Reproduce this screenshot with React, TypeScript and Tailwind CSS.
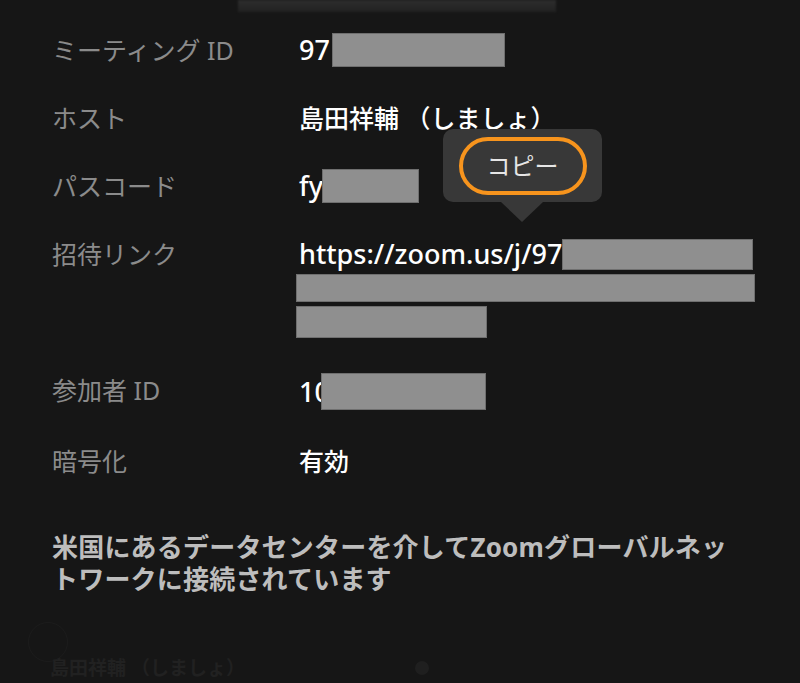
import React from "react";

const font = { fontFamily: '"Noto Sans", "Noto Sans CJK JP", sans-serif' };

function Redact({ className }: { className: string }) {
  return <span className={`inline-block shrink-0 bg-[#8f8f8f] border border-[#6f6f6f] ${className}`} />;
}

function Row({ label, children }: { label: string; children: React.ReactNode }) {
  return (
    <div className="flex py-[17px]">
      <div className="w-[247px] shrink-0 text-[25px] leading-[34px] text-[#8b8b8b]">{label}</div>
      <div className="flex-1 text-[25px] leading-[34px] font-medium text-white">{children}</div>
    </div>
  );
}

export default function App() {
  return (
    <div
      className="relative w-[800px] h-[683px] overflow-hidden bg-[#161616]"
      style={font}
    >
      {/* blurred top bar */}
      <div className="absolute left-[238px] top-0 w-[318px] h-[12px] bg-gradient-to-b from-[#2e2e2e] to-[#222222] blur-[1px]" />

      <div className="pl-[52px] pt-4">
        <Row label="ミーティング ID">
          <div className="flex items-center">
            <span className="text-[27px]">97</span>
            <Redact className="w-[173px] h-[34px] ml-[2px]" />
          </div>
        </Row>
        <Row label="ホスト">
          <span>島田祥輔 （しましょ）</span>
        </Row>
        <Row label="パスコード">
          <div className="flex items-center">
            <span className="text-[27px]">fy</span>
            <Redact className="w-[97px] h-[34px] -ml-[1px]" />
          </div>
        </Row>
        <Row label="招待リンク">
          <div className="flex flex-col">
            <div className="flex items-center h-[34px]">
              <span className="text-[27px] whitespace-nowrap">https://zoom.us/j/97</span>
              <Redact className="w-[191px] h-[31px]" />
            </div>
            <div className="flex items-center h-[34px] -ml-[3px]">
              <Redact className="w-[459px] h-[28px]" />
            </div>
            <div className="flex items-center h-[34px] -ml-[3px]">
              <Redact className="w-[191px] h-[32px]" />
            </div>
          </div>
        </Row>
        <Row label="参加者 ID">
          <div className="flex items-center">
            <span className="text-[27px]">10</span>
            <Redact className="w-[165px] h-[37px] -ml-[9px]" />
          </div>
        </Row>
        <Row label="暗号化">
          <span>有効</span>
        </Row>

        <p className="mt-[36px] text-[26px] leading-[32px] font-bold text-[#bdbdbd] tracking-[0.2px]">
          米国にあるデータセンターを介してZoomグローバルネッ
          <br />
          トワークに接続されています
        </p>
      </div>

      {/* faded content below, partly scrolled out */}
      <div className="absolute left-[28px] top-[622px] w-[40px] h-[40px] rounded-full border border-[#1c1c1c]" />
      <div className="absolute left-[50px] bottom-[3px] flex items-center">
        <span className="text-[19px] leading-[24px] font-bold text-[#212121]">島田祥輔 （しましょ）</span>
        <span className="ml-[170px] w-[14px] h-[14px] rounded-full bg-[#1f1f1f]" />
      </div>

      {/* copy tooltip */}
      <div className="absolute left-[443px] top-[129px] w-[159px] h-[73px] rounded-[10px] bg-[#383838] flex items-center justify-center">
        <div className="w-[128px] h-[58px] rounded-full border-[4px] border-[#f7941d] flex items-center justify-center text-[24px] text-[#e6e6e6]">
          コピー
        </div>
      </div>
      <div className="absolute left-[501px] top-[202px] w-0 h-0 border-l-[21px] border-r-[21px] border-t-[20px] border-l-transparent border-r-transparent border-t-[#383838]" />
    </div>
  );
}
